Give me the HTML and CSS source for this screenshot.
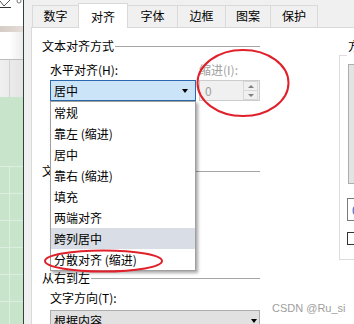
FILE: index.html
```html
<!DOCTYPE html>
<html>
	<head>
		<meta charset="utf-8" />
		<title>设置单元格格式</title>
		<link rel="stylesheet" href="styles.css">
	</head>
	<body>
		<div class="page">
			<div class="sheet">
				<div class="sheet-icons">
					<svg width="23" height="26" viewBox="0 0 23 26">
						<path d="M0 1 L4 6 L10 0" fill="none" stroke="#555" stroke-width="1"/>
						<path d="M0 7.5 H11" stroke="#333" stroke-width="1"/>
						<circle cx="19" cy="1" r="2" fill="none" stroke="#777" stroke-width="1"/>
					</svg>
				</div>
				<div class="sheet-band"></div>
				<div class="sheet-bar"></div>
				<div class="sheet-head"></div>
				<div class="sheet-green"></div>
				<div class="sheet-cells"></div>
			</div>
			<div class="dialog">
				<ul class="tabs">
					<li>数字</li>
					<li class="on">对齐</li>
					<li>字体</li>
					<li>边框</li>
					<li>图案</li>
					<li>保护</li>
				</ul>
				<div class="panel">
					<div class="main">
						<div class="legend l-align"><span>文本对齐方式</span></div>
						<div class="fields">
							<div class="field f-horiz">
								<div class="label">水平对齐(H):</div>
								<div class="combo active"><span>居中</span><i class="arrow"></i></div>
								<ul class="droplist">
									<li>常规</li>
									<li>靠左 (缩进)</li>
									<li>居中</li>
									<li>靠右 (缩进)</li>
									<li>填充</li>
									<li>两端对齐</li>
									<li class="hover">跨列居中</li>
									<li>分散对齐 (缩进)</li>
								</ul>
							</div>
							<div class="field f-indent">
								<div class="label disabled">缩进(I):</div>
								<div class="spin">
									<span class="spin-val">0</span>
									<span class="spin-btns"><i class="up"></i><i class="down"></i></span>
								</div>
							</div>
						</div>
						<div class="legend l-control"><span>文本控制</span></div>
						<div class="legend l-rtl"><span>从右到左</span></div>
						<div class="label dir-label">文字方向(T):</div>
						<div class="combo gray"><span>根据内容</span><i class="arrow"></i></div>
					</div>
					<div class="orient">
						<div class="orient-box">
							<span class="orient-title">方向</span>
							<div class="orient-text"></div>
							<div class="orient-num">0</div>
							<div class="orient-check"></div>
						</div>
					</div>
				</div>
			</div>
		</div>
		<svg class="marks" width="354" height="324" viewBox="0 0 354 324">
			<ellipse cx="243" cy="83" rx="45.5" ry="33" fill="none" stroke="#e0212b" stroke-width="2"/>
			<ellipse cx="103.5" cy="261" rx="58.5" ry="10.5" fill="none" stroke="#e0212b" stroke-width="2"/>
		</svg>
		<div class="watermark">CSDN @Ru_si</div>
	</body>
</html>
```

FILE: styles.css
```css
html,body,ul,li,div{margin:0;padding:0}
body{
	width:354px;
	height:324px;
	overflow:hidden;
	position:relative;
	background:#fff;
	font-family:"Noto Sans CJK SC","Microsoft YaHei",sans-serif;
	font-size:12px;
	color:#000;
}
ul{list-style:none}
.page{
	display:flex;
	height:324px;
	overflow:hidden;
}

/* excel sheet behind the dialog */
.sheet{
	width:23px;
	flex-shrink:0;
	border-right:1px solid #34423d;
	display:flex;
	flex-direction:column;
}
.sheet-icons{height:26px;background:#fff}
.sheet-icons svg{display:block}
.sheet-band{height:6px;background:linear-gradient(to right,#d6cbc5,#e6ddd8)}
.sheet-bar{
	height:27px;
	border-bottom:1px solid #bdbdbd;
	background:linear-gradient(to right,#fff 40%,#ececec);
}
.sheet-head{
	height:37px;
	background:
		linear-gradient(to right,transparent 9px,#d2d2d2 9px,#d2d2d2 10px,transparent 10px),
		linear-gradient(to right,#f0f0f0,#e4e4e4);
}
.sheet-green{height:69px;background:#c8e5cc}
.sheet-cells{
	flex:1;
	background:
		linear-gradient(to right,transparent 9px,#dcefdf 9px,#dcefdf 10px,transparent 10px),
		repeating-linear-gradient(to bottom,#dcefdf 0,#dcefdf 1px,#c8e5cc 1px,#c8e5cc 27px);
}

/* dialog */
.dialog{
	flex:1;
	min-width:0;
	background:#f0f0f0;
	display:flex;
	flex-direction:column;
}
.tabs{
	height:27px;
	display:flex;
	align-items:flex-end;
	padding-left:8px;
	flex-shrink:0;
}
.tabs li{
	box-sizing:border-box;
	height:22px;
	line-height:20px;
	border:1px solid #d9d9d9;
	border-bottom:none;
	margin-right:-1px;
	text-align:center;
	background:#f0f0f0;
}
.tabs li:nth-child(1){width:47px}
.tabs li:nth-child(2){width:50px}
.tabs li:nth-child(3){width:51px}
.tabs li:nth-child(4){width:49px}
.tabs li:nth-child(5){width:46px}
.tabs li:nth-child(6){width:48px}
.tabs li.on{
	height:25px;
	line-height:21px;
	padding-top:2px;
	margin-bottom:-1px;
	background:#fff;
	position:relative;
	z-index:1;
}
.panel{
	flex:1;
	background:#fff;
	border-top:1px solid #d9d9d9;
	border-left:1px solid #d9d9d9;
	margin-left:7px;
	padding-left:10px;
	display:flex;
}
.main{
	width:218px;
	flex-shrink:0;
}
.legend{
	display:flex;
	align-items:center;
	height:14px;
	line-height:14px;
}
.legend span{white-space:nowrap}
.legend:after{
	content:"";
	flex:1;
	border-top:1px solid #a5a5a5;
	margin-left:1px;
}
.l-align{margin-top:11px}
.l-control{margin-top:63px}
.l-rtl{margin-top:93px}

.fields{
	display:flex;
	gap:3px;
	padding-left:8px;
	margin-top:10px;
}
.field{position:relative}
.f-horiz{width:146px}
.f-indent{width:61px}
.label{
	height:14px;
	line-height:14px;
	margin-bottom:3px;
	white-space:nowrap;
}
.disabled{color:#a0a0a0}
.dir-label{margin:6px 0 0 8px}

.combo{
	box-sizing:border-box;
	height:21px;
	line-height:19px;
	display:flex;
	align-items:center;
	justify-content:space-between;
	padding:0 7px 0 3px;
}
.combo.active{
	border:1px solid #2b68ad;
	background:#cce4f7;
}
.combo.gray{
	width:210px;
	margin:5px 0 0 8px;
	border:1px solid #adadad;
	background:#e1e1e1;
	padding-right:2px;
}
.arrow{
	width:0;
	height:0;
	border-left:3.5px solid transparent;
	border-right:3.5px solid transparent;
	border-top:4px solid #000;
}

.droplist{
	position:absolute;
	top:38px;
	left:0;
	z-index:5;
	box-sizing:border-box;
	width:146px;
	border:1px solid #a0a0a0;
	background:#fff;
	box-shadow:2px 2px 3px rgba(0,0,0,0.35);
}
.droplist li{
	height:21px;
	line-height:21px;
	padding-left:3px;
	white-space:nowrap;
}
.droplist li.hover{background:#d9dde5}

.spin{
	box-sizing:border-box;
	height:21px;
	border:1px solid #cccccc;
	background:#f0f0f0;
	display:flex;
	align-items:center;
	padding:0 1px 0 5px;
	color:#a0a0a0;
}
.spin-btns{
	margin-left:auto;
	width:13px;
	height:17px;
	border:1px solid #d8d8d8;
	display:flex;
	flex-direction:column;
}
.spin-btns i{
	flex:1;
	display:flex;
	align-items:center;
	justify-content:center;
}
.spin-btns i.down{border-top:1px solid #d8d8d8}
.spin-btns i:after{
	content:"";
	border-left:3px solid transparent;
	border-right:3px solid transparent;
}
.spin-btns i.up:after{border-bottom:3px solid #808080}
.spin-btns i.down:after{border-top:3px solid #808080}

/* orientation group on the right */
.orient{
	margin-left:79px;
	width:100px;
	flex-shrink:0;
}
.orient-box{
	margin-top:27px;
	box-sizing:border-box;
	height:205px;
	border:1px solid #dcdcdc;
	border-right:none;
}
.orient-title{
	display:block;
	width:fit-content;
	height:17px;
	line-height:14px;
	margin:-17px 0 0 7px;
	padding:0 1px;
	background:#fff;
}
.orient-text{
	box-sizing:border-box;
	width:60px;
	height:120px;
	margin:8px 0 0 8px;
	border:1px solid #adadad;
	background:#e3e3e3;
}
.orient-num{
	box-sizing:border-box;
	width:40px;
	height:23px;
	line-height:21px;
	margin:14px 0 0 7px;
	padding-left:4px;
	border:1px solid #7a7a7a;
	color:#1a62c4;
}
.orient-check{
	box-sizing:border-box;
	width:13px;
	height:13px;
	margin:11px 0 0 7px;
	border:1px solid #333;
}

.marks{
	position:absolute;
	top:0;
	left:0;
	z-index:10;
	pointer-events:none;
}
.watermark{
	position:absolute;
	left:272px;
	top:302px;
	z-index:11;
	font-family:"Liberation Sans",Arial,sans-serif;
	font-size:11px;
	line-height:13px;
	color:#9e9e9e;
	white-space:nowrap;
}
```
